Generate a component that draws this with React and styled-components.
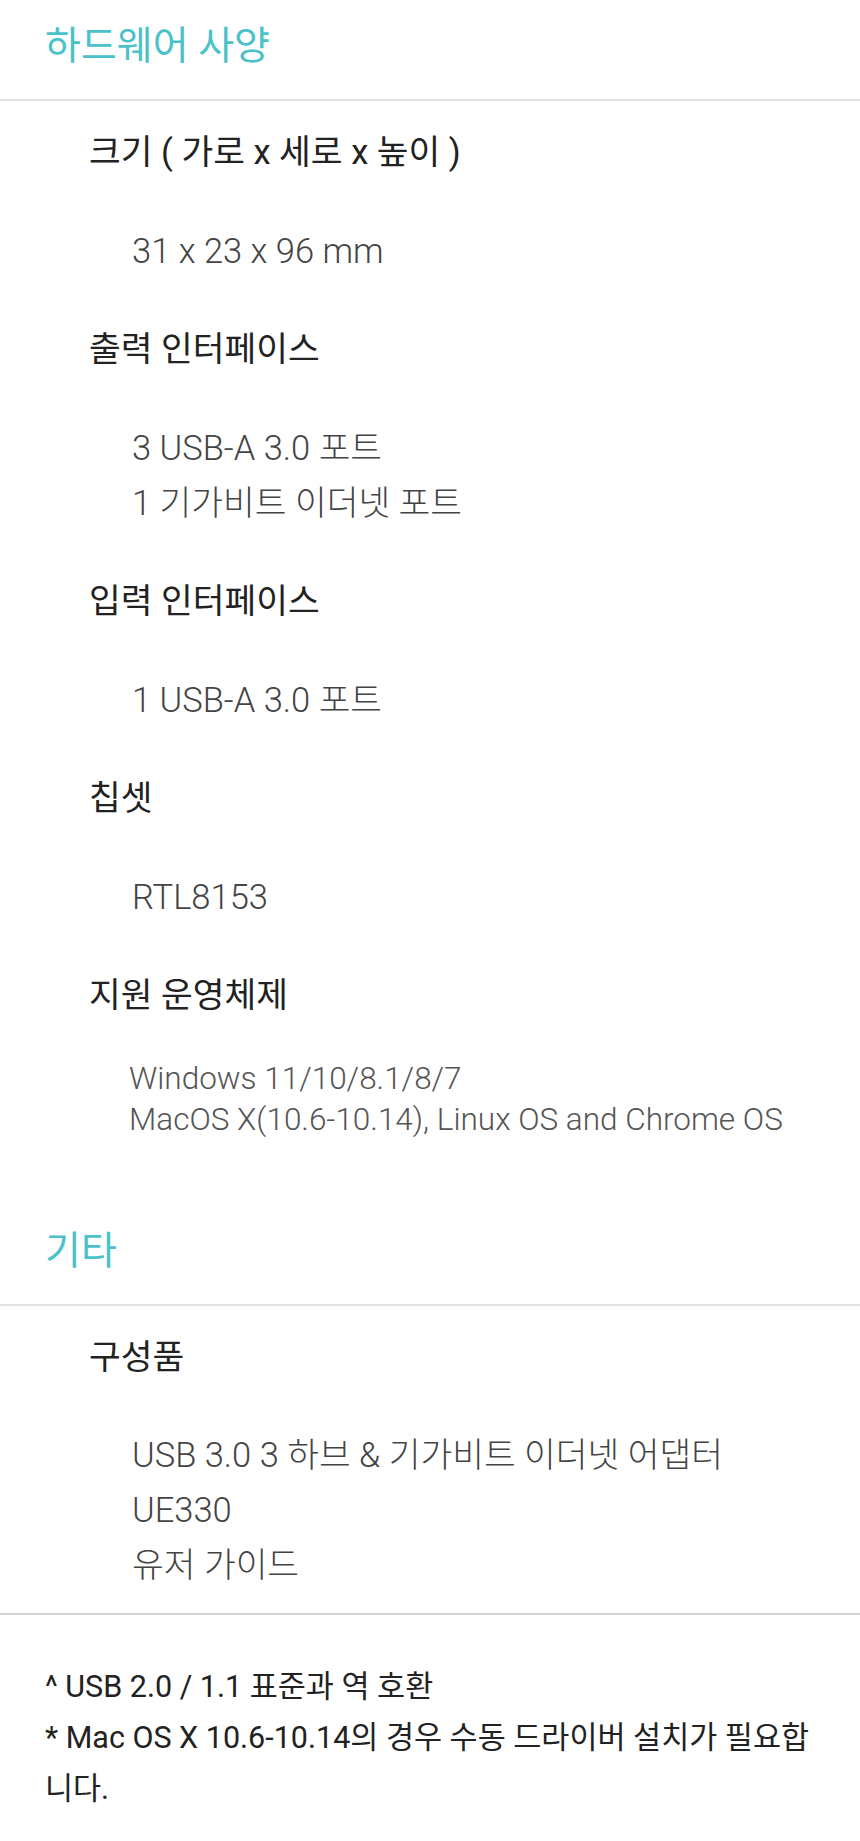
import styled, { createGlobalStyle } from "styled-components";

const GlobalStyle = createGlobalStyle`
  body {
    margin: 0;
    background: #fff;
    font-family: Roboto, "Noto Sans CJK KR", sans-serif;
  }
`;

const Page = styled.div`
  width: 860px;
`;

const SectionTitle = styled.h2`
  margin: 0;
  padding: 21px 45px 28px;
  font-size: 39px;
  line-height: 50px;
  font-weight: 400;
  color: #4bc1ca;
  border-bottom: 2px solid #e3e3e3;
`;

const SpecList = styled.dl`
  margin: 0;
  padding: 24px 0 ${(p) => p.$bottom}px 89px;
  display: flex;
  flex-direction: column;
  gap: 43.5px;
`;

const SpecLabel = styled.dt`
  font-size: 34.5px;
  line-height: 55px;
  color: #222;
`;

const SpecValue = styled.dd`
  margin: 0 0 0 43px;
  font-size: 34.5px;
  line-height: 55px;
  font-weight: 300;
  color: #444;
`;

const OsValue = styled.dd`
  margin: -9px 0 0 40px;
  font-size: 31.5px;
  line-height: 41px;
  font-weight: 300;
  color: #555;
`;

const Line = styled.div``;

const Footer = styled.div`
  border-top: 2px solid #d2d2d2;
  padding: 46px 45px 30px;
  font-size: 30.5px;
  line-height: 51px;
  color: #222;
`;

const Note = styled.p`
  margin: 0;
`;

const hardware = [
  { label: "크기 ( 가로 x 세로 x 높이 )", values: ["31 x 23 x 96 mm"] },
  { label: "출력 인터페이스", values: ["3 USB-A 3.0 포트", "1 기가비트 이더넷 포트"] },
  { label: "입력 인터페이스", values: ["1 USB-A 3.0 포트"] },
  { label: "칩셋", values: ["RTL8153"] },
];

const osLines = [
  "Windows 11/10/8.1/8/7",
  "MacOS X(10.6-10.14), Linux OS and Chrome OS",
];

const contents = ["USB 3.0 3 하브 & 기가비트 이더넷 어댑터", "UE330", "유저 가이드"];

export default function App() {
  return (
    <Page>
      <GlobalStyle />
      <SectionTitle>하드웨어 사양</SectionTitle>
      <SpecList $bottom={65}>
        {hardware.map((item) => (
          <>
            <SpecLabel key={item.label}>{item.label}</SpecLabel>
            <SpecValue>
              {item.values.map((v) => (
                <Line key={v}>{v}</Line>
              ))}
            </SpecValue>
          </>
        ))}
        <SpecLabel>지원 운영체제</SpecLabel>
        <OsValue>
          {osLines.map((v) => (
            <Line key={v}>{v}</Line>
          ))}
        </OsValue>
      </SpecList>

      <SectionTitle>기타</SectionTitle>
      <SpecList $bottom={20}>
        <SpecLabel>구성품</SpecLabel>
        <SpecValue>
          {contents.map((v) => (
            <Line key={v}>{v}</Line>
          ))}
        </SpecValue>
      </SpecList>

      <Footer>
        <Note>^ USB 2.0 / 1.1 표준과 역 호환</Note>
        <Note>* Mac OS X 10.6-10.14의 경우 수동 드라이버 설치가 필요합니다.</Note>
      </Footer>
    </Page>
  );
}
